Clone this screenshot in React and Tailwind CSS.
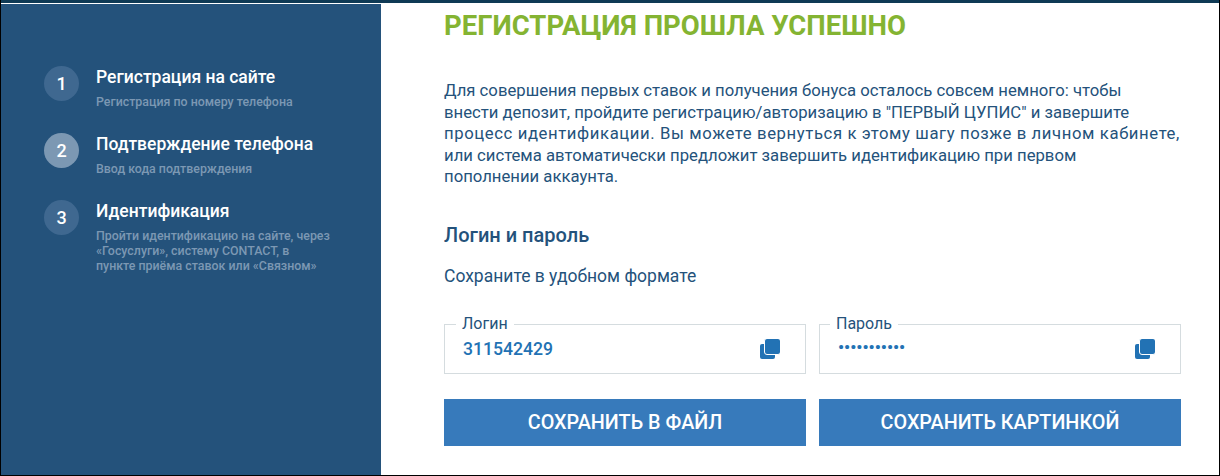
import React from "react"

function CopyIcon() {
  return (
    <svg width="20" height="20" viewBox="0 0 20 20" className="shrink-0">
      <rect x="0" y="5" width="15" height="15" rx="2" fill="#2272b4" />
      <rect x="4.500" y="-0.500" width="16" height="16" rx="2.500" fill="#2272b4" stroke="#fff" />
    </svg>
  )
}

function Step({ num, title, children, active }) {
  return (
    <div className="flex">
      <div className={"w-[35px] h-[35px] rounded-full flex items-center justify-center text-white text-[18px] font-medium shrink-0 " + (active ? "bg-[#7c98b3]" : "bg-[#3f6890]")}>
        {num}
      </div>
      <div className="ml-[17px]">
        <div className="text-white text-[17.500px] leading-[22px] font-medium">{title}</div>
        <div className="text-[#7c98b3] text-[12.400px] leading-[15px] mt-[6px] font-medium">{children}</div>
      </div>
    </div>
  )
}

function CopyField({ label, value, labelClass, valueClass }) {
  return (
    <div className="relative w-[362px] h-[50px] border border-[#d5dcdf] flex items-center pl-[18px] pr-[25px] justify-between">
      <span className={"absolute -top-[10px] bg-white px-[6px] text-[16px] leading-[18px] text-[#24527b] " + labelClass}>{label}</span>
      <span className={"text-[#2272b4] " + valueClass}>{value}</span>
      <CopyIcon />
    </div>
  )
}

export default function App() {
  return (
    <div className="w-[1220px] h-[476px] bg-white overflow-hidden flex flex-col border-l border-r border-b border-black font-['Roboto',sans-serif]">
      <div className="h-[3px] bg-[#0f3a55] shrink-0"></div>
      <div className="h-px bg-white shrink-0"></div>
      <div className="flex flex-1 min-h-0">
        <aside className="w-[380px] bg-[#24527b] pl-[43px] pt-[62px] flex flex-col gap-[24px] shrink-0">
          <Step num="1" title="Регистрация на сайте">Регистрация по номеру телефона</Step>
          <Step num="2" title="Подтверждение телефона" active>Ввод кода подтверждения</Step>
          <Step num="3" title="Идентификация">
            Пройти идентификацию на сайте, через<br />
            «Госуслуги», систему CONTACT, в<br />
            пункте приёма ставок или «Связном»
          </Step>
        </aside>
        <main className="pl-[63px] text-[#24527b]">
          <h1 className="text-[#84b432] text-[27.500px] leading-[32px] font-bold mt-[6px]">РЕГИСТРАЦИЯ ПРОШЛА УСПЕШНО</h1>
          <p className="text-[16.700px] leading-[21.500px] mt-[38px] whitespace-nowrap">
            Для совершения первых ставок и получения бонуса осталось совсем немного: чтобы<br />
            внести депозит, пройдите регистрацию/авторизацию в "ПЕРВЫЙ ЦУПИС" и завершите<br />
            <span className="tracking-[0.6px]">процесс идентификации. Вы можете вернуться к этому шагу позже в личном кабинете,</span><br />
            или система автоматически предложит завершить идентификацию при первом<br />
            пополнении аккаунта.
          </p>
          <h2 className="text-[20px] leading-[24px] font-medium mt-[35px]">Логин и пароль</h2>
          <p className="text-[17.500px] leading-[20px] mt-[19px]">Сохраните в удобном формате</p>
          <div className="flex gap-[13px] mt-[38px]">
            <CopyField label="Логин" value="311542429" labelClass="left-[11px]" valueClass="text-[17.600px] font-medium mt-[2px]" />
            <CopyField label="Пароль" value="•••••••••••" labelClass="left-[10px]" valueClass="text-[17px] font-bold -mt-[1px]" />
          </div>
          <div className="flex gap-[13px] mt-[25px]">
            <button className="w-[362px] h-[47px] pt-[2px] bg-[#377abb] text-white text-[19.800px] font-medium">СОХРАНИТЬ В ФАЙЛ</button>
            <button className="w-[362px] h-[47px] pt-[2px] bg-[#377abb] text-white text-[19.800px] font-medium">СОХРАНИТЬ КАРТИНКОЙ</button>
          </div>
        </main>
      </div>
    </div>
  )
}
